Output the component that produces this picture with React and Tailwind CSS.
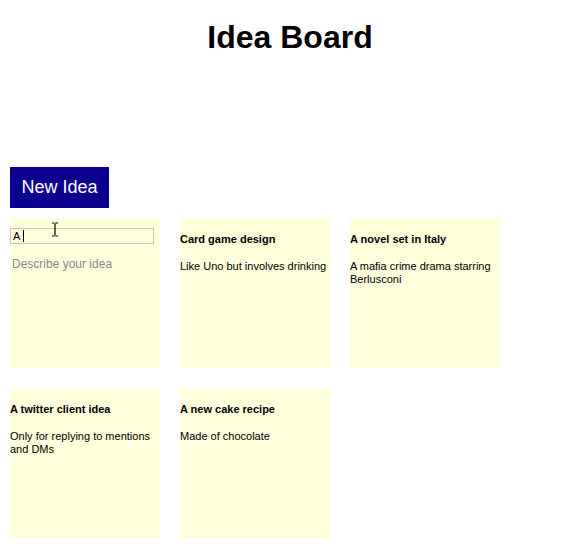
import React from "react";

const ideas = [
  { id: 2, title: "Card game design", body: "Like Uno but involves drinking" },
  { id: 3, title: "A novel set in Italy", body: "A mafia crime drama starring Berlusconi" },
  { id: 4, title: "A twitter client idea", body: "Only for replying to mentions and DMs" },
  { id: 5, title: "A new cake recipe", body: "Made of chocolate" },
];

function IdeaTile({ idea }) {
  return (
    <div className="w-[150px] h-[150px] bg-[#ffffdc] pt-[15px]">
      <h4 className="text-[11px] leading-[13px] font-bold text-black">{idea.title}</h4>
      <p className="mt-[14px] text-[11px] leading-[13px] text-black">{idea.body}</p>
    </div>
  );
}

function EditTile() {
  return (
    <div className="relative w-[150px] h-[150px] bg-[#ffffdc] pt-[10px]">
      <div className="w-[144px] h-[16px] border border-[#c8c8c8] flex items-center pl-[2px] text-[11px] leading-[13px] text-black">
        A<span className="ml-[3px] inline-block w-px h-[12px] bg-black" />
      </div>
      <p className="mt-[13px] pl-[2px] text-[12px] leading-[14px] text-[#8a8a8a]">Describe your idea</p>
      {/* mouse cursor */}
      <svg className="absolute left-[41px] top-[4px]" width="8" height="15" viewBox="0 0 8 15">
        <path d="M1 1h2.5M4.5 1H7M4 1.5v12M1 14h2.5M4.5 14H7" stroke="#000" strokeWidth="1.2" fill="none" />
      </svg>
    </div>
  );
}

export default function App() {
  return (
    <div className="w-[572px] min-h-[552px] bg-white font-['Liberation_Sans',Arial,sans-serif]">
      <h1 className="pt-[21px] pl-[8px] text-center text-[32px] leading-[32px] font-bold text-black">Idea Board</h1>
      <div className="px-[10px] pt-[114px]">
        <button className="bg-[#0b0090] text-white text-[18px] leading-[21px] px-[11px] py-[10px] w-[99px] whitespace-nowrap">New Idea</button>
        <div className="mt-[10px] grid grid-cols-[150px_150px_150px] gap-x-[20px] gap-y-[20px]">
          <EditTile />
          {ideas.map((idea) => (
            <IdeaTile key={idea.id} idea={idea} />
          ))}
        </div>
      </div>
    </div>
  );
}
